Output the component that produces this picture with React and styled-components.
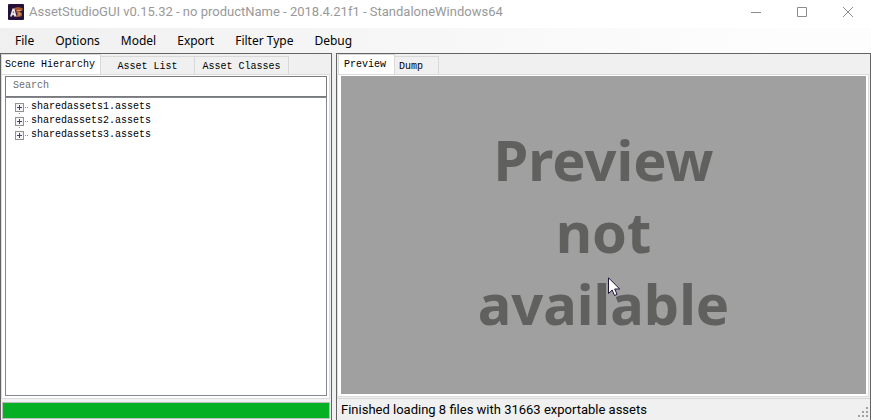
import React, { useState } from "react";
import styled, { createGlobalStyle } from "styled-components";

const GlobalStyle = createGlobalStyle`
  * { box-sizing: border-box; }
  html, body, #root { height: 100%; margin: 0; }
  body { background: #f0f0f0; color: #000; font: 12px/16px "Noto Sans", "Open Sans", sans-serif; overflow: hidden; }
  button, input { font: inherit; color: inherit; }
`;

const Window = styled.div`
  display: flex;
  flex-direction: column;
  height: 100vh;
`;

const TitleBar = styled.header`
  display: flex;
  flex: none;
  align-items: center;
  height: 28px;
  padding: 0 0 4px 8px;
  background: #fff;
`;

const Title = styled.h1`
  flex: 1;
  margin: 0 0 0 5px;
  font-family: Roboto, sans-serif;
  font-size: 13px;
  line-height: 16px;
  font-weight: 400;
  color: #999;
  white-space: nowrap;
`;

const CaptionButton = styled.button`
  display: flex;
  align-items: center;
  justify-content: center;
  width: 46px;
  height: 24px;
  padding: 0;
  border: 0;
  background: none;
`;

const MenuBar = styled.nav`
  display: flex;
  flex: none;
  gap: 5px;
  height: 25px;
  padding: 0 7px;
  background: linear-gradient(90deg, #f0f0f0, #fdfdfd 90%);
`;

const MenuButton = styled.button`
  padding: 0 8px;
  border: 0;
  background: none;
  white-space: nowrap;
`;

const Split = styled.main`
  display: grid;
  grid-template-columns: 332fr 535fr;
  gap: 4px;
  flex: 1;
  min-height: 0;
`;

const Pane = styled.section`
  display: flex;
  flex-direction: column;
  min-width: 0;
  border: 1px solid #646464;
  border-bottom: 0;
`;

const TabStrip = styled.div`
  display: flex;
  flex: none;
  align-items: flex-end;
  height: 20px;
  padding-left: ${(p) => p.$inset}px;
`;

const Tab = styled.button`
  flex: none;
  width: ${(p) => p.$width}px;
  height: ${(p) => (p.$active ? 20 : 18)}px;
  padding: ${(p) => (p.$active ? 0 : 2)}px 0 0 ${(p) => p.$indent}px;
  border: 1px solid #d9d9d9;
  border-bottom: 0;
  border-left-width: ${(p) => (p.$active ? 1 : 0)}px;
  background: ${(p) => (p.$active ? "#fff" : "#f0f0f0")};
  font: 10px/14px "Liberation Mono", monospace;
  text-align: ${(p) => p.$align};
  white-space: nowrap;
`;

const TabPage = styled.div`
  display: flex;
  flex: 1;
  flex-direction: column;
  min-height: 0;
  margin-right: 1px;
  padding: 1px 2px 2px 3px;
  border: 1px solid #dcdcdc;
  background: #fff;
`;

const SearchBox = styled.input`
  flex: none;
  width: 100%;
  height: 21px;
  padding: 0 7px 2px;
  border: 1px solid #7a7a7a;
  border-radius: 0;
  outline: 0;
  background: #fff;
  font: 10px/14px "Liberation Mono", monospace;
  &::placeholder { color: #6d6d6d; opacity: 1; }
`;

const Tree = styled.ul`
  flex: 1;
  min-height: 0;
  margin: 0;
  padding: 2px 8px;
  border: 1px solid #828790;
  list-style: none;
  font: 10px/14px "Liberation Mono", monospace;
`;

const TreeRow = styled.li`
  display: flex;
  align-items: center;
  gap: 2px;
  height: 14px;
`;

const Expander = styled.button`
  display: flex;
  width: 15px;
  height: 14px;
  padding: 0;
  border: 0;
  background: none;
`;

const ProgressArea = styled.div`
  flex: none;
  height: 21px;
  padding: 3px 1px 1px;
`;

const ProgressTrack = styled.div`
  height: 17px;
  border: 1px solid #bcbcbc;
  background: #e6e6e6;
`;

const ProgressFill = styled.div`
  height: 100%;
  background: #06b025;
`;

const Preview = styled.div`
  position: relative;
  display: flex;
  flex: 1;
  align-items: center;
  justify-content: center;
  min-height: 0;
  padding-bottom: 8px;
  background: #a0a0a0;
`;

const PreviewMessage = styled.p`
  width: min-content;
  margin: 0;
  color: #60605f;
  font-size: 56px;
  line-height: 72px;
  font-weight: 700;
  text-align: center;
`;

const Pointer = styled.svg`
  position: absolute;
  left: calc(50% + 4px);
  top: 201px;
`;

const StatusBar = styled.footer`
  display: flex;
  flex: none;
  align-items: center;
  justify-content: space-between;
  height: 22px;
  margin-top: 1px;
  padding: 0 2px 0 4px;
  border-top: 1px solid #d7d7d7;
  font-family: Roboto, sans-serif;
  font-size: 13px;
  white-space: nowrap;
`;

const Grip = styled.svg`
  align-self: flex-end;
  margin-bottom: 3px;
`;

const AppIcon = () => (
  <svg width="16" height="16" viewBox="0 0 16 16" aria-hidden="true">
    <rect width="16" height="16" rx="1" fill="#25103c" />
    <path d="M6 4l4-1 4 1 1 1-1 2h-3l3 2v3l-3 1H8l1-3-1-3z" fill="#a9562b" />
    <path d="M9 6.500h4M10 9h2v2h-2" fill="none" stroke="#dfa16a" />
    <path d="M2 12.500l2.500-8h2l2 8H6L5.700 11H4.500L4 12.500z" fill="#e8e1e4" />
    <path d="M4.800 9L5.300 7l.4 2z" fill="#25103c" />
  </svg>
);

const captions = [
  ["Minimize", "M0 5.500h10"],
  ["Maximize", "M.5 .5h9v9h-9z"],
  ["Close", "M0 0l10 10M10 0L0 10"],
];

const menus = ["File", "Options", "Model", "Export", "Filter Type", "Debug"];
const assets = ["sharedassets1.assets", "sharedassets2.assets", "sharedassets3.assets"];
const leftTabs = [
  ["Scene Hierarchy", 100, "left", 3],
  ["Asset List", 94, "center", 0],
  ["Asset Classes", 94, "center", 0],
];
const rightTabs = [
  ["Preview", 57, "left", 5],
  ["Dump", 44, "left", 4],
];
const gripDots = [[8, 0], [4, 4], [8, 4], [0, 8], [4, 8], [8, 8]];

function Tabs({ items, label, inset }) {
  const [active, setActive] = useState(0);
  return (
    <TabStrip role="tablist" aria-label={label} $inset={inset}>
      {items.map(([name, width, align, indent], i) => (
        <Tab
          key={name}
          role="tab"
          aria-selected={i === active}
          $active={i === active}
          $width={width}
          $align={align}
          $indent={indent}
          onClick={() => setActive(i)}
        >
          {name}
        </Tab>
      ))}
    </TabStrip>
  );
}

function PlusBox({ last }) {
  return (
    <svg width="15" height="14" viewBox="0 0 15 14" shapeRendering="crispEdges">
      <rect x="1.500" y="3.500" width="8" height="8" fill="#f5f5f5" stroke="#919191" />
      <path d="M3 7.500h5M5.500 5v5" stroke="#40456a" />
      <path d="M11 7.500h4" stroke="#8c8c8c" strokeDasharray="1 1" />
      {!last && <path d="M5.500 13v1" stroke="#8c8c8c" />}
    </svg>
  );
}

export default function App() {
  return (
    <>
      <GlobalStyle />
      <Window>
        <TitleBar>
          <AppIcon />
          <Title>AssetStudioGUI v0.15.32 - no productName - 2018.4.21f1 - StandaloneWindows64</Title>
          {captions.map(([name, d]) => (
            <CaptionButton key={name} aria-label={name}>
              <svg width="10" height="10" viewBox="0 0 10 10">
                <path d={d} fill="none" stroke="#8c8c8c" />
              </svg>
            </CaptionButton>
          ))}
        </TitleBar>
        <MenuBar aria-label="Main menu">
          {menus.map((name) => (
            <MenuButton key={name}>{name}</MenuButton>
          ))}
        </MenuBar>
        <Split>
          <Pane>
            <Tabs items={leftTabs} label="Assets" inset={0} />
            <TabPage>
              <SearchBox aria-label="Search" placeholder="Search" />
              <Tree>
                {assets.map((name, i) => (
                  <TreeRow key={name}>
                    <Expander aria-label={`Expand ${name}`}>
                      <PlusBox last={i === assets.length - 1} />
                    </Expander>
                    {name}
                  </TreeRow>
                ))}
              </Tree>
            </TabPage>
            <ProgressArea>
              <ProgressTrack role="progressbar" aria-label="Loading" aria-valuenow={100}>
                <ProgressFill />
              </ProgressTrack>
            </ProgressArea>
          </Pane>
          <Pane>
            <Tabs items={rightTabs} label="Asset view" inset={1} />
            <TabPage>
              <Preview>
                <PreviewMessage>Preview not available</PreviewMessage>
                <Pointer width="13" height="20" viewBox="0 0 13 20" aria-hidden="true">
                  <path
                    d="M.5 .8v15.700l3.700-3.500 2.300 5.500 2.600-1.100-2.400-5.400h5z"
                    fill="#fff"
                    stroke="#1d1238"
                  />
                </Pointer>
              </Preview>
            </TabPage>
            <StatusBar>
              <span role="status">Finished loading 8 files with 31663 exportable assets</span>
              <Grip width="10" height="10" viewBox="0 0 10 10" aria-hidden="true">
                {gripDots.map(([x, y]) => (
                  <rect key={`${x}-${y}`} x={x} y={y} width="2" height="2" fill="#a0a0a0" />
                ))}
              </Grip>
            </StatusBar>
          </Pane>
        </Split>
      </Window>
    </>
  );
}
